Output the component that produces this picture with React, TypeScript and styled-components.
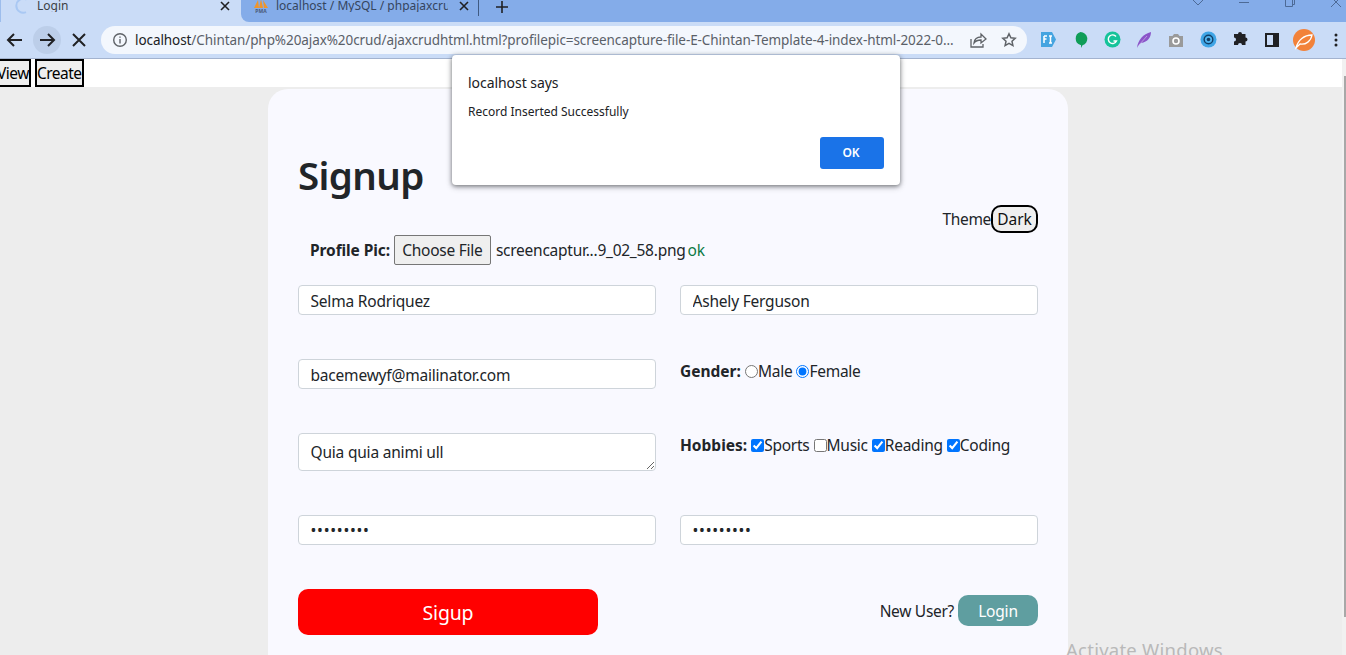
import React from 'react';
import styled, { createGlobalStyle } from 'styled-components';

const Global = createGlobalStyle`
  html, body { margin: 0; padding: 0; height: 655px; overflow: hidden; background: #ededed; }
  * { box-sizing: border-box; }
  body { font-family: "Noto Sans", "Open Sans", sans-serif; color: #212529; }
`;
const Shell = styled.div`position: relative; width: 1346px; height: 655px; overflow: hidden; background: #ededed;`;
const TabStrip = styled.div`display: flex; height: 22px; background: #cadcf7; overflow: hidden; align-items: flex-start;`;
const ActiveTab = styled.div`display: flex; align-items: center; width: 241px; height: 22px; padding: 0 11px 10px 12px; flex: none; color: #3c4043; border-left: 1px solid #9dbdec;`;
const Spinner = styled.svg`width: 16px; height: 16px; flex: none; margin-right: 8px; margin-top: -1px;`;
const TabLabel = styled.span`flex: 1; white-space: nowrap; overflow: hidden; font-size: 12px; line-height: 12px;`;
const RestStrip = styled.div`display: flex; flex: 1; height: 22px; align-items: flex-start; background: #84ace9; border-bottom-left-radius: 8px;`;
const InactiveTab = styled.div`display: flex; align-items: center; width: 238px; height: 16px; padding: 0 7px 4px 12px; border-right: 1px solid #3f5a82; flex: none; color: #35455e;`;
const InactiveLabel = styled.span`width: 172px; margin-left: 7px; margin-right: 11px; white-space: nowrap; overflow: hidden; font-size: 12px; line-height: 12px;`;
const Plus = styled.svg`width: 14px; height: 14px; margin: 0 0 0 16px;`;
const WindowControls = styled.div`margin-left: auto; display: flex; align-items: flex-start; padding-right: 5px;`;
const WinIcon = styled.svg<{ $gap: number }>`display: block; margin-left: ${p => p.$gap}px;`;
const Toolbar = styled.div`display: flex; align-items: center; height: 37px; background: #cadcf7; border-bottom: 1px solid #a3b3cf; padding: 0 0 1px 5px;`;
const NavIcon = styled.svg`width: 20px; height: 20px; flex: none;`;
const ForwardHalo = styled.div`display: flex; flex: none; align-items: center; justify-content: center; width: 28px; height: 28px; border-radius: 50%; background: #bccee9; margin: 0 4px 0 8px;`;
const StopSlot = styled.div`display: flex; flex: none; align-items: center; justify-content: center; width: 28px; height: 28px; margin-right: 8px;`;
const Omnibox = styled.div`display: flex; align-items: center; width: 926px; height: 28px; border-radius: 14px; background: #f3f7fd; padding: 0 10px 0 11px; flex: none;`;
const Url = styled.div`flex: 1; min-width: 0; font-size: 13.5px; letter-spacing: -0.08px; color: #5a6068; white-space: nowrap; overflow: hidden; margin-left: 7px; margin-right: 10px;`;
const Host = styled.span`color: #202124;`;
const Exts = styled.div`display: flex; flex: none; align-items: center; margin-left: 5px;`;
const ExtSlot = styled.div`display: flex; flex: none; align-items: center; justify-content: center; width: 32px; height: 28px;`;
const Page = styled.div`position: relative; height: 596px;`;
const TopNav = styled.nav`display: flex; gap: 4px; height: 28px; background: #fff; margin-left: -5px; padding-right: 3px; align-items: flex-start; overflow: hidden;`;
const NavLink = styled.a`display: block; height: 28px; border: 2px solid #000; background: #efefef; font-size: 15.5px; line-height: 25px; padding: 0; color: #000; letter-spacing: -.5px;`;
const Card = styled.main`width: 800px; margin: 2px 0 0 268px; background: #f9f9ff; border-radius: 20px; padding: 57px 30px 60px;`;
const Title = styled.h1`margin: 0 0 1px; font-size: 38.5px; font-weight: 600; line-height: 58px; color: #212529; letter-spacing: -.6px;`;
const ThemeRow = styled.div`display: flex; justify-content: flex-end; align-items: center; height: 28px; font-size: 15.5px; letter-spacing: -.35px;`;
const ThemeBtn = styled.button`height: 28px; width: 47px; padding: 0; border: 2px solid #000; border-radius: 10px; background: #efefef; font: inherit; color: #111;`;
const ProfileRow = styled.div`display: flex; align-items: center; height: 30px; margin: 2px 0 20px 12px; font-size: 15.5px; letter-spacing: -.25px; white-space: nowrap;`;
const Strong = styled.b`font-weight: 700; letter-spacing: 0;`;
const ProfileLabel = styled(Strong)`letter-spacing: -.1px;`;
const FileBtn = styled.span`display: block; width: 97px; height: 30px; line-height: 29px; text-align: center; border: 1px solid #767676; border-radius: 2px; background: #efefef; margin: 0 5px 0 4px;`;
const Ok = styled.span`color: #0d7a45; margin-left: 2px;`;
const FormGrid = styled.div`display: grid; grid-template-columns: 358px 358px; column-gap: 24px; row-gap: 44px; align-items: start;`;
const Field = styled.input`
  display: block; width: 100%; height: 30px; border: 1px solid #ced4da; border-radius: 4px; background: #fff;
  padding: 1px 11.5px 0; font: 15.5px "Noto Sans", sans-serif; letter-spacing: -.2px; color: #212529; outline: none;
  &[type='password'] { letter-spacing: .75px; padding-top: 0; }
`;
const Area = styled.textarea`display: block; width: 100%; height: 38px; border: 1px solid #ced4da; border-radius: 4px; background: #fff; padding: 7px 11.5px 0; font: 15.5px/22px "Noto Sans", sans-serif; letter-spacing: -.2px; color: #212529; outline: none; overflow: hidden; resize: vertical;`;
const Choice = styled.div`display: flex; align-items: center; height: 24px; font-size: 15.5px; letter-spacing: -.25px; white-space: nowrap;`;
const ChoiceLabel = styled.label`display: flex; align-items: center; margin-left: 4px;`;
const Radio = styled.input`width: 13px; height: 13px; margin: 0; accent-color: #0075ff;`;
const SignupBtn = styled.button`display: block; width: 300px; height: 46px; border: 0; border-radius: 10px; background: #f00; color: #fff; font: 400 19.5px "Noto Sans", sans-serif; letter-spacing: -.2px;`;
const LoginRow = styled.div`display: flex; justify-content: flex-end; align-items: center; gap: 4px; padding-top: 6px; font-size: 15.5px; letter-spacing: -.3px;`;
const LoginBtn = styled.button`width: 80px; height: 31px; border: 0; border-radius: 10px; background: #5f9ea0; color: #fff; font: 15.5px "Noto Sans", sans-serif; letter-spacing: -.2px;`;
const Dialog = styled.div`position: absolute; left: 452px; top: 55px; width: 448px; height: 130px; background: #fff; border-radius: 4px; box-shadow: 0 1px 4px rgba(60,64,67,.6), 0 2px 6px rgba(60,64,67,.3); padding: 19px 16px 16px; display: flex; flex-direction: column;`;
const DialogTitle = styled.div`font-size: 14px; line-height: 17px; letter-spacing: -.05px; color: #202124;`;
const DialogMsg = styled.div`font-size: 12px; line-height: 16px; margin-top: 13px; color: #202124;`;
const DialogOk = styled.button`align-self: flex-end; margin-top: auto; width: 64px; height: 32px; border: 0; border-radius: 3px; background: #1a73e8; color: #fff; font: 600 12px "Noto Sans", sans-serif; padding: 0 2px 1px 0;`;
const ScrollTrack = styled.div`position: absolute; right: 0; top: 59px; bottom: 0; width: 4px; background: #f1f1f1;`;
const ScrollThumb = styled.div`margin: 17px 0 0 2px; width: 2px; height: 541px; background: #a8a8a8;`;
const Watermark = styled.div`position: absolute; left: 1066px; top: 637px; font-size: 18.5px; letter-spacing: .25px; color: #b9b9b9; white-space: nowrap;`;

const I = { fill: 'none', stroke: '#202124', strokeWidth: 2 } as const;
const W = { fill: 'none', stroke: '#4d6a96', strokeWidth: 1 } as const;

export default function App() {
  return (
    <Shell>
      <Global />
      <TabStrip>
        <ActiveTab>
          <Spinner viewBox="0 0 16 16"><path d="M13.500 1.500A7 7 0 1 0 13 14.200" fill="none" stroke="#a9c8f3" strokeWidth="2" /></Spinner>
          <TabLabel>Login</TabLabel>
          <svg width="10" height="10" viewBox="0 0 10 10"><path d="M1 1l8 8M9 1l-8 8" stroke="#202124" strokeWidth="1.6" /></svg>
        </ActiveTab>
        <RestStrip>
          <InactiveTab>
            <svg width="16" height="13" viewBox="0 0 16 13"><path d="M1 8L5 0l1 8zM6 8l2-9 2 9zM11 8l-1-8 5 8z" fill="#f0952b" /><text x="8" y="12.500" textAnchor="middle" fontSize="5" fontWeight="700" fill="#4a5a78">PMA</text></svg>
            <InactiveLabel>localhost / MySQL / phpajaxcrud</InactiveLabel>
            <svg width="10" height="10" viewBox="0 0 10 10"><path d="M1 1l8 8M9 1l-8 8" stroke="#202124" strokeWidth="1.6" /></svg>
          </InactiveTab>
          <Plus viewBox="0 0 14 14"><path d="M7 1v12M1 7h12" stroke="#202124" strokeWidth="1.6" /></Plus>
          <WindowControls>
            <WinIcon $gap={0} width="14" height="6" viewBox="0 0 14 6" {...W}><path d="M2 0l5 5 5-5" /></WinIcon>
            <WinIcon $gap={34} width="10" height="6" viewBox="0 0 10 6" {...W}><path d="M0 2.500h10" /></WinIcon>
            <WinIcon $gap={36} width="10" height="8" viewBox="0 0 10 8" {...W}><path d="M.5 0v6.500h7V0M9.500 0v4.500H7.500" /></WinIcon>
            <WinIcon $gap={36} width="10" height="8" viewBox="0 0 10 8" {...W}><path d="M0 7l7-7M10 7L3 0" /></WinIcon>
          </WindowControls>
        </RestStrip>
      </TabStrip>
      <Toolbar>
        <NavIcon viewBox="0 0 20 20" {...I}><path d="M17 10H3M9 4l-6 6 6 6" /></NavIcon>
        <ForwardHalo><NavIcon viewBox="0 0 20 20" {...I}><path d="M3 10h14M11 4l6 6-6 6" /></NavIcon></ForwardHalo>
        <StopSlot><NavIcon viewBox="0 0 20 20" {...I}><path d="M4 4l12 12M16 4L4 16" /></NavIcon></StopSlot>
        <Omnibox>
          <svg width="16" height="16" viewBox="0 0 16 16" fill="none" stroke="#5f6368" strokeWidth="1.4"><circle cx="8" cy="8" r="6.3" /><path d="M8 7v4.500M8 4.400v1.400" /></svg>
          <Url><Host>localhost</Host>/Chintan/php%20ajax%20crud/ajaxcrudhtml.html?profilepic=screencapture-file-E-Chintan-Template-4-index-html-2022-0...</Url>
          <svg width="18" height="18" viewBox="0 0 18 18" fill="none" stroke="#5f6368" strokeWidth="1.3" style={{ marginRight: 14 }}><path d="M2 8v8h12v-3" /><path d="M5 12c.5-4 3.500-6 7-6V3l5 5-5 4V9c-3 0-5.500 1-7 3z" /></svg>
          <svg width="16" height="16" viewBox="0 0 16 16" fill="none" stroke="#5f6368" strokeWidth="1.5"><path d="M8 1.800l1.900 4 4.300.5-3.200 3 .9 4.300L8 11.400 4.100 13.600 5 9.300l-3.200-3 4.300-.5z" /></svg>
        </Omnibox>
        <Exts>
          <ExtSlot><svg width="17" height="17" viewBox="0 0 17 17"><path d="M1 1h11l4 7.500-4 7.500H1z" fill="#45a4e0" /><path d="M4 5h3M4 5v7M4 8h2.500M9 5h3M10.500 5v7M9 12h3" fill="none" stroke="#fff" strokeWidth="1.500" /></svg></ExtSlot>
          <ExtSlot><svg width="15" height="18" viewBox="0 0 15 18"><path d="M7.500 1a6.800 6.800 0 0 1 2 13.300L8 17v-3H7.500a6.800 6.800 0 0 1 0-13z" fill="#0f9d58" /></svg></ExtSlot>
          <ExtSlot><svg width="17" height="17" viewBox="0 0 17 17"><circle cx="8.500" cy="8.500" r="8" fill="#15c39a" /><path d="M12 5.500A4.300 4.300 0 1 0 12.500 10H9.500" fill="none" stroke="#fff" strokeWidth="1.400" /></svg></ExtSlot>
          <ExtSlot><svg width="16" height="18" viewBox="0 0 16 18"><path d="M1 17C2 9 7 3 15 1c0 5-3 10-10 11-2 1-3 3-4 5z" fill="#8b55c9" /><path d="M3 14L11 5" stroke="#cdb7e8" strokeWidth=".7" /></svg></ExtSlot>
          <ExtSlot><svg width="16" height="14" viewBox="0 0 16 14"><path d="M1 3h3.500L6 1h4l1.500 2H15v11H1z" fill="#9a9a9a" /><circle cx="8" cy="8" r="3" fill="none" stroke="#fff" strokeWidth="1.600" /></svg></ExtSlot>
          <ExtSlot><svg width="17" height="17" viewBox="0 0 17 17"><circle cx="8.500" cy="8.500" r="8" fill="#3fa5e6" /><circle cx="8.500" cy="8.500" r="5" fill="#123e66" /><circle cx="8.500" cy="8.500" r="3.600" fill="#4fb3ee" /><circle cx="8.500" cy="8.500" r="1.800" fill="#123e66" /></svg></ExtSlot>
          <ExtSlot><svg width="15" height="15" viewBox="0 0 15 15"><path d="M5 2a2 2 0 0 1 4 0h3.500v3.500a2 2 0 0 1 0 4V13H9a2 2 0 0 0-4 0H1V9.500a2 2 0 0 0 0-4V2z" fill="#202124" /></svg></ExtSlot>
          <ExtSlot><svg width="14" height="14" viewBox="0 0 14 14"><path fillRule="evenodd" d="M0 0h14v14H0zM2 2v10h6V2z" fill="#202124" /></svg></ExtSlot>
          <ExtSlot><svg width="22" height="22" viewBox="0 0 22 22"><circle cx="11" cy="11" r="11" fill="#f2823a" /><path d="M3 19C5 11 11 6 19 6c-1 6-6 10-12 9z" fill="none" stroke="#fff" strokeWidth="1.300" /></svg></ExtSlot>
          <ExtSlot><svg width="4" height="14" viewBox="0 0 4 14"><circle cx="2" cy="2" r="1.500" fill="#202124" /><circle cx="2" cy="7" r="1.500" fill="#202124" /><circle cx="2" cy="12" r="1.500" fill="#202124" /></svg></ExtSlot>
        </Exts>
      </Toolbar>
      <Page>
        <TopNav>
          <NavLink>View</NavLink>
          <NavLink>Create</NavLink>
        </TopNav>
        <Card>
          <Title>Signup</Title>
          <ThemeRow>Theme<ThemeBtn>Dark</ThemeBtn></ThemeRow>
          <ProfileRow><ProfileLabel>Profile Pic:</ProfileLabel><FileBtn>Choose File</FileBtn>screencaptur...9_02_58.png<Ok>ok</Ok></ProfileRow>
          <FormGrid>
            <Field defaultValue="Selma Rodriquez" />
            <Field defaultValue="Ashely Ferguson" />
            <Field defaultValue="bacemewyf@mailinator.com" />
            <Choice><Strong>Gender:</Strong>
              <ChoiceLabel><Radio type="radio" name="g" />Male</ChoiceLabel>
              <ChoiceLabel><Radio type="radio" name="g" defaultChecked />Female</ChoiceLabel>
            </Choice>
            <Area defaultValue="Quia quia animi ull" />
            <Choice><Strong>Hobbies:</Strong>
              <ChoiceLabel><Radio type="checkbox" defaultChecked />Sports</ChoiceLabel>
              <ChoiceLabel><Radio type="checkbox" />Music</ChoiceLabel>
              <ChoiceLabel><Radio type="checkbox" defaultChecked />Reading</ChoiceLabel>
              <ChoiceLabel><Radio type="checkbox" defaultChecked />Coding</ChoiceLabel>
            </Choice>
            <Field type="password" defaultValue="123456789" />
            <Field type="password" defaultValue="123456789" />
            <SignupBtn>Sigup</SignupBtn>
            <LoginRow>New User?<LoginBtn>Login</LoginBtn></LoginRow>
          </FormGrid>
        </Card>
      </Page>
      <ScrollTrack><ScrollThumb /></ScrollTrack>
      <Dialog>
        <DialogTitle>localhost says</DialogTitle>
        <DialogMsg>Record Inserted Successfully</DialogMsg>
        <DialogOk>OK</DialogOk>
      </Dialog>
      <Watermark>Activate Windows</Watermark>
    </Shell>
  );
}
